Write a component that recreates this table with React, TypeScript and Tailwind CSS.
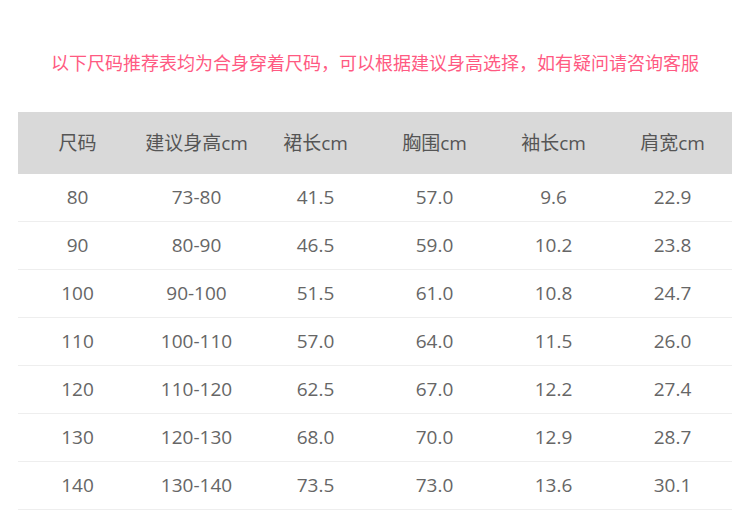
const headers = ["尺码", "建议身高cm", "裙长cm", "胸围cm", "袖长cm", "肩宽cm"];

const rows = [
  ["80", "73-80", "41.5", "57.0", "9.6", "22.9"],
  ["90", "80-90", "46.5", "59.0", "10.2", "23.8"],
  ["100", "90-100", "51.5", "61.0", "10.8", "24.7"],
  ["110", "100-110", "57.0", "64.0", "11.5", "26.0"],
  ["120", "110-120", "62.5", "67.0", "12.2", "27.4"],
  ["130", "120-130", "68.0", "70.0", "12.9", "28.7"],
  ["140", "130-140", "73.5", "73.0", "13.6", "30.1"],
];

export default function App() {
  return (
    <div className="h-[510px] w-[750px] overflow-hidden bg-white font-['Open_Sans','Noto_Sans_CJK_SC',sans-serif]">
      <p className="pt-[49px] text-center font-['Noto_Sans_CJK_SC',sans-serif] text-[18px] leading-[26px] text-[#ff5a82]">
        以下尺码推荐表均为合身穿着尺码，可以根据建议身高选择，如有疑问请咨询客服
      </p>
      <div className="mx-[18px] mt-[37px] w-[714px]">
        <div className="grid h-[62px] grid-cols-6 items-center bg-[#d9d9d9] text-center text-[19px] text-[#555]">
          {headers.map((h) => (
            <div key={h}>{h}</div>
          ))}
        </div>
        {rows.map((r) => (
          <div
            key={r[0]}
            className="grid h-[48px] grid-cols-6 items-center border-b border-[#eeeeee] text-center text-[19px] text-[#666]"
          >
            {r.map((c, i) => (
              <div key={i}>{c}</div>
            ))}
          </div>
        ))}
      </div>
    </div>
  );
}
